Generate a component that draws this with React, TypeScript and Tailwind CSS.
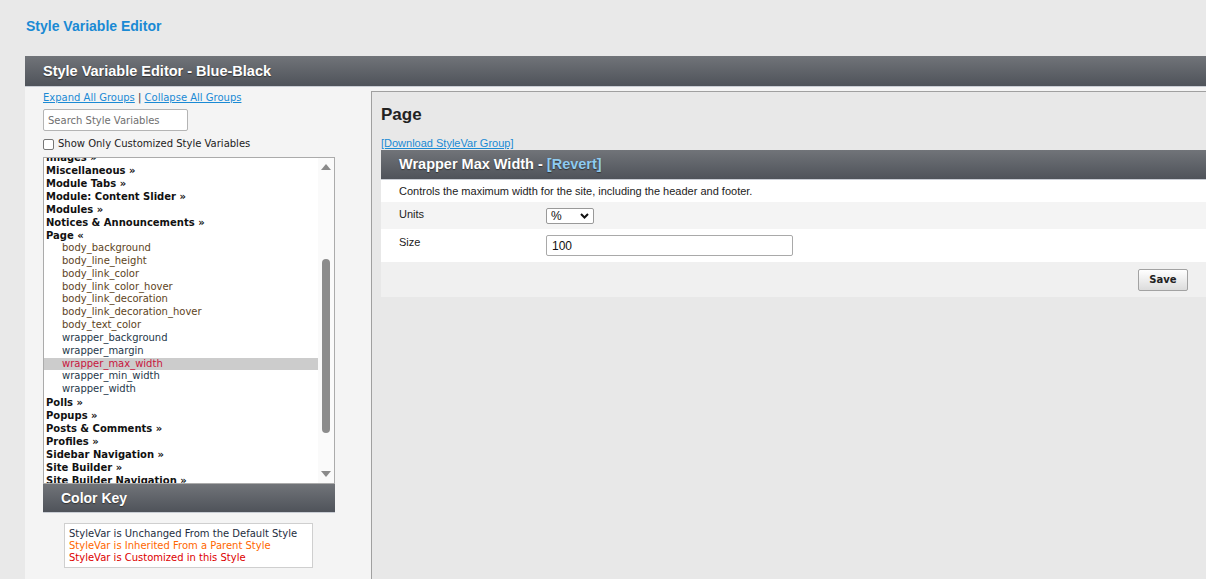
import React from "react";

const groupsTop = [
  "Images",
  "Miscellaneous",
  "Module Tabs",
  "Module: Content Slider",
  "Modules",
  "Notices & Announcements",
];
const pageItems: { name: string; kind: "body" | "wrap" | "sel" }[] = [
  { name: "body_background", kind: "body" },
  { name: "body_line_height", kind: "body" },
  { name: "body_link_color", kind: "body" },
  { name: "body_link_color_hover", kind: "body" },
  { name: "body_link_decoration", kind: "body" },
  { name: "body_link_decoration_hover", kind: "body" },
  { name: "body_text_color", kind: "body" },
  { name: "wrapper_background", kind: "wrap" },
  { name: "wrapper_margin", kind: "wrap" },
  { name: "wrapper_max_width", kind: "sel" },
  { name: "wrapper_min_width", kind: "wrap" },
  { name: "wrapper_width", kind: "wrap" },
];
const groupsBottom = [
  "Polls",
  "Popups",
  "Posts & Comments",
  "Profiles",
  "Sidebar Navigation",
  "Site Builder",
  "Site Builder Navigation",
];

const tahoma = "font-['DejaVu_Sans',sans-serif]";
const arial = "font-['Liberation_Sans',Arial,sans-serif]";

function Group({ label, open }: { label: string; open?: boolean }) {
  return (
    <div className="h-[13px] leading-[13px] pl-[2px] text-[10px] font-bold text-[#111] whitespace-nowrap">
      {label} <span>{open ? "«" : "»"}</span>
    </div>
  );
}

export default function App() {
  return (
    <div className={`h-[579px] w-full overflow-hidden bg-[#e9e9e9] ${arial}`}>
      <div className="pt-[17px] pl-[26px] h-[35px]">
        <div className="text-[14px] leading-[18px] font-bold text-[#1a8ad4]">Style Variable Editor</div>
      </div>
      <div className="ml-[25px] mt-[21px] w-[1200px] flex flex-col h-[523px]">
        {/* Main header */}
        <div className="h-[31px] bg-gradient-to-b from-[#717479] to-[#4f535a] border-b border-[#c9cdd4] flex items-center pl-[18px]">
          <span className="text-white font-bold text-[14.5px] [text-shadow:0_1px_1px_#333] leading-[30px]">
            Style Variable Editor - Blue-Black
          </span>
        </div>
        <div className="flex flex-1 bg-[#f4f4f4]">
          {/* Left column */}
          <div className={`w-[346px] shrink-0 pl-[18px] pt-[4px] ${tahoma}`}>
            <div className="h-[13px] leading-[13px] text-[10px] text-[#1a8ad4] whitespace-nowrap">
              <span className="underline">Expand All Groups</span>
              <span className="text-[#333]"> | </span>
              <span className="underline">Collapse All Groups</span>
            </div>
            <div className="mt-[5px] w-[145px] h-[22px] border border-[#b4b4b4] rounded-[2px] bg-white flex items-center pl-[4px] text-[10px] text-[#6f6f6f]">
              Search Style Variables
            </div>
            <div className="mt-[7px] h-[12px] flex items-center">
              <div className="w-[11px] h-[11px] border border-[#767676] rounded-[2px] bg-white" />
              <span className="ml-[4px] text-[10px] text-[#222] leading-[12px] whitespace-nowrap">
                Show Only Customized Style Variables
              </span>
            </div>
            <div className="mt-[7px] w-[292px] h-[327px] border border-[#ababab] bg-white flex overflow-hidden">
              <div className="flex-1 overflow-hidden">
                <div className="mt-[-7px]">
                  {groupsTop.map((g) => (
                    <Group key={g} label={g} />
                  ))}
                  <Group label="Page" open />
                  {pageItems.map((it) => (
                    <div
                      key={it.name}
                      className={`h-[12.85px] leading-[12.85px] pl-[18px] text-[10px] whitespace-nowrap ${
                        it.kind === "sel"
                          ? "bg-[#cccccc] text-[#c8143c]"
                          : it.kind === "body"
                          ? "text-[#5e4422]"
                          : "text-[#26384a]"
                      }`}
                    >
                      {it.name}
                    </div>
                  ))}
                  {groupsBottom.map((g) => (
                    <Group key={g} label={g} />
                  ))}
                </div>
              </div>
              <div className="w-[16px] bg-[#fafafa] flex flex-col items-center">
                <svg width="10" height="6" viewBox="0 0 10 6" className="mt-[6px]">
                  <path d="M5 0 L10 6 L0 6 Z" fill="#8a8a8a" />
                </svg>
                <div className="mt-[89px] w-[8px] h-[174px] rounded-[4px] bg-[#8c8c8c]" />
                <div className="flex-1" />
                <svg width="10" height="6" viewBox="0 0 10 6" className="mb-[6px]">
                  <path d="M0 0 L10 0 L5 6 Z" fill="#8a8a8a" />
                </svg>
              </div>
            </div>
            <div className={`w-[292px] h-[29px] bg-gradient-to-b from-[#717479] to-[#4f535a] border-b border-[#c9cdd4] flex items-center pl-[18px] ${arial}`}>
              <span className="text-white font-bold text-[14px] [text-shadow:0_1px_1px_#333]">Color Key</span>
            </div>
            <div className="ml-[21px] mt-[10px] w-[249px] h-[45px] border border-[#cfcfcf] bg-white pl-[4px] pt-[4px] text-[10px] leading-[12px] whitespace-nowrap">
              <div className="text-[#1e2e3e]">StyleVar is Unchanged From the Default Style</div>
              <div className="text-[#ff6600]">StyleVar is Inherited From a Parent Style</div>
              <div className="text-[#dd0000]">StyleVar is Customized in this Style</div>
            </div>
          </div>
          {/* Right pane */}
          <div className="flex-1 mt-[4px] border-l border-t border-[#a0a0a0] bg-[#e8e8e8] pl-[9px] pr-[10px]">
            <div className="pt-[13px] h-[33px]">
              <div className="text-[17px] leading-[20px] font-bold text-[#222]">Page</div>
            </div>
            <div className="mt-[12px] h-[13px] text-[11px] leading-[13px] text-[#1a8ad4] underline">
              [Download StyleVar Group]
            </div>
            <div className="h-[30px] bg-gradient-to-b from-[#717479] to-[#4f535a] border-b border-[#c9cdd4] flex items-center pl-[18px]">
              <span className="font-bold text-[14.5px] text-white [text-shadow:0_1px_1px_#333]">
                Wrapper Max Width - <span className="text-[#8ecbf0]">[Revert]</span>
              </span>
            </div>
            <div className="h-[22px] bg-white pl-[18px] flex items-center text-[11px] text-[#222]">
              Controls the maximum width for the site, including the header and footer.
            </div>
            <div className="h-[27px] bg-[#f4f4f4] flex items-center text-[11px] text-[#222]">
              <div className="w-[165px] pl-[18px] -mt-[2px]">Units</div>
              <div className="w-[48px] h-[16px] border border-[#999] rounded-[2px] bg-white flex items-center justify-between pl-[4px] pr-[4px] text-[12px] text-[#111]">
                <span>%</span>
                <svg width="9" height="6" viewBox="0 0 9 6">
                  <path d="M1 1 L4.5 4.5 L8 1" stroke="#111" strokeWidth="2" fill="none" />
                </svg>
              </div>
            </div>
            <div className="h-[33px] bg-white flex items-start text-[11px] text-[#222]">
              <div className="w-[165px] pl-[18px] pt-[5px]">Size</div>
              <div className="mt-[6px] w-[247px] h-[21px] border border-[#a9a9a9] rounded-[2px] bg-white flex items-center pl-[5px] text-[12px] text-[#111]">
                100
              </div>
            </div>
            <div className="h-[35px] bg-[#f0f0f0] flex items-center justify-end pr-[27px]">
              <div className={`w-[50px] h-[22px] border border-[#a2a2a2] rounded-[2px] bg-gradient-to-b from-white to-[#dcdcdc] flex items-center justify-center text-[10px] font-bold text-[#222] ${tahoma}`}>
                Save
              </div>
            </div>
          </div>
        </div>
      </div>
    </div>
  );
}
